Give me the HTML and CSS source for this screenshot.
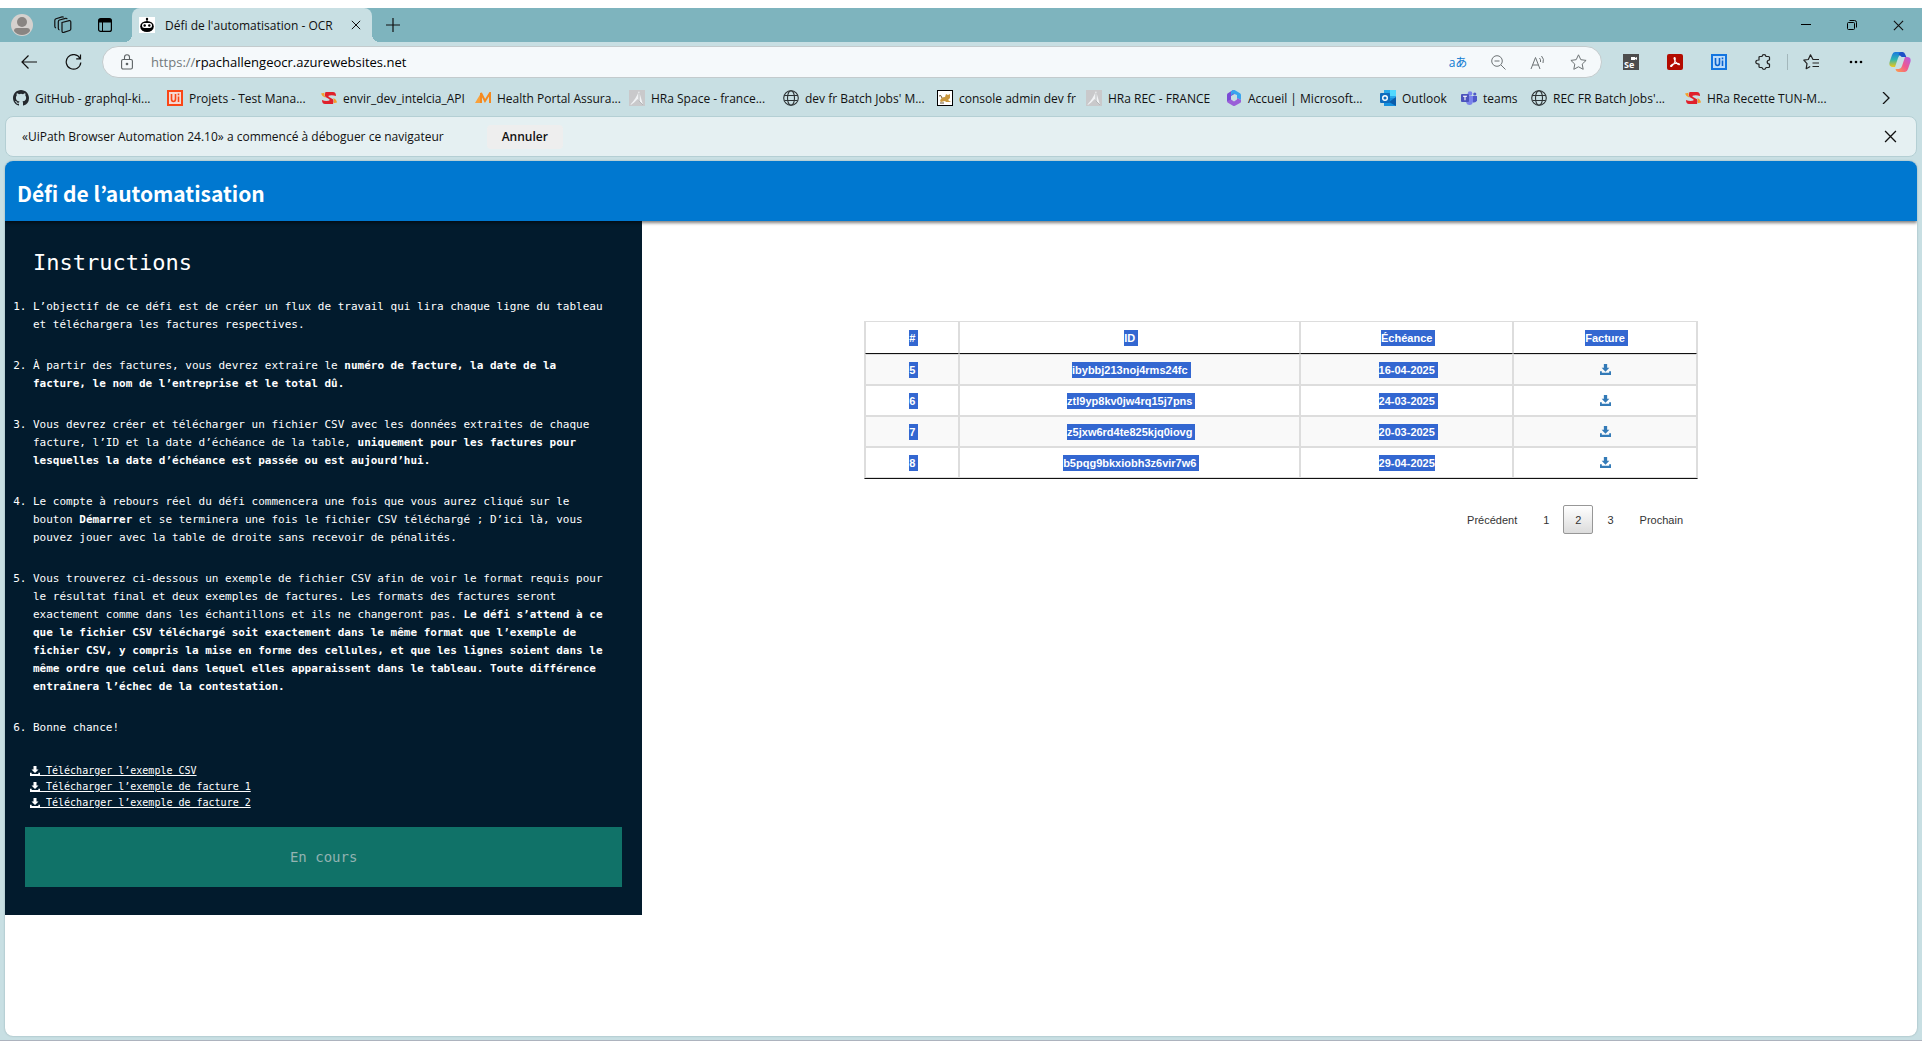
FILE: index.html
```html
<!DOCTYPE html>
<html lang="fr">
<head>
<meta charset="utf-8">
<meta name="viewport" content="width=device-width, initial-scale=1">
<title>Défi de l'automatisation - OCR</title>
<link rel="stylesheet" href="styles.css">
</head>
<body>
<svg class="sprite" aria-hidden="true">
  <symbol id="i-download" viewBox="0 0 12 12"><path d="M4.200 0h3.600v4.200h2.400L6 8.400 1.800 4.200h2.400zM0 8h2v1.500h8V8h2v4H0z"/></symbol>
  <symbol id="i-close" viewBox="0 0 12 12"><path d="M1 1l10 10M11 1L1 11" fill="none" stroke="currentColor" stroke-width="1.200"/></symbol>
  <symbol id="i-globe" viewBox="0 0 16 16"><g fill="none" stroke="#2d3335" stroke-width="1.100"><circle cx="8" cy="8" r="7.300"/><ellipse cx="8" cy="8" rx="3.500" ry="7.300"/><path d="M1.500 5.500h13M1.500 10.500h13"/></g></symbol>
  <symbol id="i-sopra" viewBox="0 0 16 12"><path d="M4.500 0H12q3 0 3 4-3-1.200-6.500-.6Q6.500 3.800 8 5l4 2.300q1.300 1.700 0 4.700H4q-3 0-3-4 3 1.300 6.500.8Q9.500 8.200 8 7L4.500 5Q3 3 4.500 0z" fill="#e0202b"/><path d="M0 1.500L3.500.8Q2.500 3.500 4.500 5.700 1 4.800 0 1.500zM16 10.500l-3.500.7q1-3-.3-5Q15.500 7 16 10.500z" fill="#f5a02a"/></symbol>
  <symbol id="i-hra" viewBox="0 0 16 16"><rect width="16" height="16" fill="#c9c9cb"/><path d="M1 15C5 11 8 6 10 1l4 14-5.500-6C6 12 4 14 1 15z" fill="#f1f3f5"/><path d="M10 3v8l4 4" fill="none" stroke="#b5b7b9"/></symbol>
</svg>

<header class="browser">
  <div class="tabstrip">
    <button class="slot slot-profile" aria-label="Profil"><svg width="22" height="22" viewBox="0 0 22 22"><circle cx="11" cy="11" r="11" fill="#d5d1ce"/><circle cx="11" cy="8" r="5" fill="#898582"/><path d="M3 17q0-3 3-3h10q3 0 3 3-3 4-8 4t-8-4z" fill="#898582"/></svg></button>
    <button class="slot slot-tool" aria-label="Espaces de travail"><svg width="18" height="18" viewBox="0 0 18 18" fill="none" stroke="#111" stroke-width="1.200"><path d="M8 6.500l7.200-1.800q1.600-.3 1.600 1.300v7q0 1.200-1.200 1.500l-5.800 1.900q-1.800.4-1.800-1.400z"/><path d="M5.500 14q-1.200-.2-1.200-1.700V5.700q0-1.300 1.200-1.700l6-1.700q1.300-.2 1.700.8M2 12q-1.200-.3-1.200-1.700V4.400q0-1.300 1.200-1.700L8 .9q1.200-.2 1.600.5"/></svg></button>
    <button class="slot slot-tool" aria-label="Onglets verticaux"><svg width="14" height="14" viewBox="0 0 14 14"><rect x=".6" y=".6" width="12.800" height="12.800" rx="2" fill="none" stroke="#000" stroke-width="1.200"/><path d="M1 1h12v3.500H1z"/><path d="M4.500 4v9" stroke="#000"/></svg></button>
    <div class="tab">
      <svg width="16" height="16" viewBox="0 0 16 16"><rect width="16" height="16" fill="#fff"/><circle cx="8" cy="2" r="1.200"/><path d="M8 2v3" stroke="#000"/><ellipse cx="8" cy="9.500" rx="6.800" ry="5.500"/><rect x="3" y="6" width="10" height="5" rx="2.500" fill="#fff"/><circle cx="5.700" cy="8.500" r="1.200"/><circle cx="10.300" cy="8.500" r="1.200"/></svg>
      <span class="tab-title">Défi de l'automatisation - OCR</span>
      <button class="tab-close" aria-label="Fermer l'onglet"><svg width="10" height="10"><use href="#i-close"/></svg></button>
    </div>
    <button class="slot slot-new" aria-label="Nouvel onglet"><svg width="14" height="14" viewBox="0 0 14 14"><path d="M7 0v14M0 7h14" stroke="#111" stroke-width="1.200"/></svg></button>
    <div class="window-buttons">
      <button class="slot slot-window" aria-label="Réduire"><svg width="10" height="10"><path d="M0 4.500h10" stroke="#000" stroke-width="1"/></svg></button>
      <button class="slot slot-window" aria-label="Restaurer"><svg width="10" height="10" viewBox="0 0 10 10" fill="none" stroke="#000"><rect x=".5" y="2.500" width="7" height="7" rx="1"/><path d="M2.500.5h5q2 0 2 2v5"/></svg></button>
      <button class="slot slot-window" aria-label="Fermer"><svg width="11" height="11"><use href="#i-close"/></svg></button>
    </div>
  </div>

  <div class="toolbar">
    <button class="slot slot-nav" aria-label="Retour"><svg width="16" height="14" viewBox="0 0 16 14" fill="none" stroke="#111" stroke-width="1.200"><path d="M16 7H1M7.500.5L1 7l6.500 6.500"/></svg></button>
    <button class="slot slot-nav" aria-label="Actualiser"><svg width="17" height="17" viewBox="0 0 17 17" fill="none" stroke="#111" stroke-width="1.200"><path d="M15 4.500A7.300 7.300 0 1 0 15.800 8.500M15.500.5v4.300h-4.300"/></svg></button>
    <form class="address">
      <svg class="lock" width="12" height="16" viewBox="0 0 12 16" fill="none" stroke="#5c6264" stroke-width="1.100"><rect x=".6" y="5.500" width="10.800" height="9.500" rx="1.500"/><path d="M3.500 5.500V3.300a2.500 2.500 0 0 1 5 0v2.200"/><circle cx="6" cy="10" r=".8" fill="#5c6264"/></svg>
      <label class="scheme" for="url">https://</label>
      <input id="url" class="url" type="text" value="rpachallengeocr.azurewebsites.net">
      <button type="button" class="slot slot-page translate" aria-label="Traduire">aあ</button>
      <button type="button" class="slot slot-page" aria-label="Zoom"><svg width="15" height="15" viewBox="0 0 15 15" fill="none" stroke="#6d7375"><circle cx="6" cy="6" r="5.300"/><path d="M10 10l4.500 4.500M3.500 6h5"/></svg></button>
      <button type="button" class="slot slot-page" aria-label="Lecture à voix haute"><svg width="16" height="15" viewBox="0 0 16 15" fill="none" stroke="#6d7375"><path d="M1 14L5.500 2.500 10 14M2.500 10h6M9.500 3q1.500 1.500 1 4M11.500 1q3 3 1.500 7"/></svg></button>
      <button type="button" class="slot slot-page" aria-label="Favori"><svg width="17" height="16" viewBox="0 0 17 16" fill="none" stroke="#6d7375" stroke-linejoin="round"><path d="M8.500.8l2.300 4.900 5.300.7-3.900 3.700 1 5.200-4.700-2.500-4.700 2.500 1-5.200L.9 6.400l5.300-.7z"/></svg></button>
    </form>
    <div class="extensions">
      <button class="slot slot-ext" aria-label="Selenium IDE"><svg width="16" height="16" viewBox="0 0 16 16"><rect width="16" height="16" fill="#4d4d4d"/><path d="M8 3h4v3H8zM12 4l2-1v3l-2-1z" fill="#fff"/><text class="glyph-se" x="1" y="14">Se</text></svg></button>
      <button class="slot slot-ext" aria-label="Adobe Acrobat"><svg width="16" height="16" viewBox="0 0 16 16"><rect width="16" height="16" rx="2" fill="#b30b00"/><path d="M7.500 3.500q1.200 0 .5 3.500-.8 3.500-3.500 5.500-1.200.3-.8-.8Q5 10 8.500 9.500q4-.5 4 .8-.3 1-2-.2Q7.500 7.500 7 4.500q0-.9.500-1z" fill="none" stroke="#fff" stroke-width="1.100"/></svg></button>
      <button class="slot slot-ext" aria-label="UiPath"><svg width="16" height="16" viewBox="0 0 16 16"><rect x="1" y="1" width="14" height="14" fill="#bcdcfa" stroke="#1375e0" stroke-width="2"/><path d="M4.500 4v5q0 2.500 2 2.500t2-2.500V4M11.500 6.500V12M11.500 3.500v1.800" fill="none" stroke="#0a63cf" stroke-width="1.600"/></svg></button>
      <button class="slot slot-ext" aria-label="Extensions"><svg width="16" height="16" viewBox="0 0 16 16" fill="none" stroke="#222" stroke-width="1.200" stroke-linejoin="round"><path d="M5 2.500h2Q7.200.6 9 .6t2 1.900h2.500q1 0 1 1V6q-2.300.1-2.300 2t2.300 2v2.500q0 1-1 1H11q-.2 1.900-2 1.900t-2-1.900H5q-1 0-1-1V10Q.8 10 .8 8T4 6V3.500q0-1 1-1z"/></svg></button>
      <button class="slot slot-ext divided" aria-label="Favoris"><svg width="17" height="16" viewBox="0 0 17 16" fill="none" stroke="#222" stroke-width="1.200"><path d="M16 5.500H10L7.500.8 5.300 5.500.8 6.200 4 9.700l-.8 5 4-2.200M9.500 9H16M9.500 12.500H16" stroke-linejoin="round"/></svg></button>
      <button class="slot slot-ext" aria-label="Paramètres"><svg width="14" height="4"><circle cx="2" cy="2" r="1.300"/><circle cx="7" cy="2" r="1.300"/><circle cx="12" cy="2" r="1.300"/></svg></button>
      <button class="slot slot-ext" aria-label="Copilot"><svg width="22" height="20" viewBox="0 0 22 20"><defs><linearGradient id="cp1" x1="0" y1="0" x2="0" y2="1"><stop offset="0" stop-color="#1b78e0"/><stop offset=".5" stop-color="#2fb6b0"/><stop offset="1" stop-color="#f3c813"/></linearGradient><linearGradient id="cp2" x1="1" y1="0" x2="0" y2="1"><stop offset="0" stop-color="#b05be8"/><stop offset=".5" stop-color="#f0588e"/><stop offset="1" stop-color="#ffa14a"/></linearGradient></defs><path d="M15.500 3Q15 0 12 0H6Q4 0 3 3L.6 10Q-.6 15 4 15h2l3-9q.8-3 3-3z" fill="url(#cp1)"/><path d="M12 0h1.500q2 0 3 3l.8 2h-4.600Q11 3 9.500 2.500 10.500 0 12 0z" fill="#1d50c8"/><path d="M6.500 17Q7 20 10 20h6q2 0 3-3l2.400-7Q22.600 5 18 5h-2l-3 9q-.8 3-3 3z" fill="url(#cp2)"/></svg></button>
    </div>
  </div>

  <nav class="bookmarks" aria-label="Favoris">
    <a class="bookmark" href="#"><svg width="16" height="16" viewBox="0 0 16 16"><path fill="#24292e" d="M8 0C3.580 0 0 3.580 0 8c0 3.540 2.290 6.530 5.470 7.590.4.070.55-.17.55-.38 0-.19-.01-.82-.01-1.490-2.010.37-2.530-.49-2.690-.94-.09-.23-.48-.94-.82-1.130-.28-.15-.68-.52-.01-.53.63-.01 1.080.58 1.230.82.72 1.210 1.870.87 2.330.66.07-.52.28-.87.51-1.070-1.780-.2-3.640-.89-3.640-3.950 0-.87.31-1.590.82-2.150-.08-.2-.36-1.020.08-2.120 0 0 .67-.21 2.200.82a7.400 7.400 0 0 1 4 0c1.530-1.040 2.200-.82 2.200-.82.44 1.100.16 1.920.08 2.120.51.56.82 1.270.82 2.150 0 3.070-1.870 3.750-3.650 3.950.29.25.54.73.54 1.480 0 1.070-.01 1.930-.01 2.200 0 .21.15.46.55.38A8 8 0 0 0 16 8c0-4.420-3.580-8-8-8z"/></svg>GitHub - graphql-ki...</a>
    <a class="bookmark" href="#"><svg width="16" height="16" viewBox="0 0 16 16"><rect x="1" y="1" width="14" height="14" fill="#f5d9d4" stroke="#fa4616" stroke-width="2"/><path d="M4.500 4v5q0 2.500 2 2.500t2-2.500V4M11.500 6.500V12M11.500 3.500v1.800" fill="none" stroke="#fa4616" stroke-width="1.600"/></svg>Projets - Test Mana...</a>
    <a class="bookmark" href="#"><svg width="16" height="12"><use href="#i-sopra"/></svg>envir_dev_intelcia_API</a>
    <a class="bookmark" href="#"><svg width="16" height="12" viewBox="0 0 16 12"><path d="M0 11L6 1v10z" fill="#f9a13a"/><path d="M6 11V1l4 8 5-8v10" fill="none" stroke="#f58a1f" stroke-width="2"/></svg>Health Portal Assura...</a>
    <a class="bookmark" href="#"><svg width="16" height="16"><use href="#i-hra"/></svg>HRa Space - france...</a>
    <a class="bookmark" href="#"><svg width="16" height="16"><use href="#i-globe"/></svg>dev fr Batch Jobs' M...</a>
    <a class="bookmark fit-console" href="#"><svg width="16" height="16" viewBox="0 0 16 16"><rect x=".5" y=".5" width="15" height="15" fill="#fff" stroke="#000"/><path d="M3 11Q4 7 8 7l1-3 2 1 2-1v4l-2 2 3 2H9l-1-1-4 1z" fill="#c9983f"/><path d="M3 13h4M2 6q2-2 3 2" stroke="#6a5330" fill="none"/></svg>console admin dev fr</a>
    <a class="bookmark fit-rec" href="#"><svg width="16" height="16"><use href="#i-hra"/></svg>HRa REC - FRANCE</a>
    <a class="bookmark" href="#"><svg width="16" height="16" viewBox="0 0 16 16"><path d="M7 0L1.500 3.500Q1 4 1 5v6l4 2.500V6l6-3.500z" fill="#7a4bd6"/><path d="M7 0q1-.4 2 .2l5 3q1 .6 1 1.800v5l-4-2V5L7 3.500 5 6V1.500z" fill="#3aa5ee"/><path d="M15 10v1.500q0 1-1 1.600l-5 2.700q-1 .5-2 0l-5.500-3.300L1 11l4-1.500 3 2 3-2V8z" fill="#9a5fd8"/></svg>Accueil | Microsoft...</a>
    <a class="bookmark fit-outlook" href="#"><svg width="16" height="16" viewBox="0 0 16 16"><path d="M4 0h12v14H4z" fill="#28a8ea"/><path d="M10 0h6v6h-6z" fill="#50d9ff"/><path d="M4 8l12 0v8H4z" fill="#1490df"/><path d="M9 12l7-5v9z" fill="#0a5dab"/><rect y="3" width="10" height="10" rx="1" fill="#0f6cbd"/><circle cx="5" cy="8" r="2.300" fill="none" stroke="#fff" stroke-width="1.400"/></svg>Outlook</a>
    <a class="bookmark fit-teams" href="#"><svg width="16" height="14" viewBox="0 0 16 14"><circle cx="9" cy="2.500" r="2.300" fill="#7b83eb"/><circle cx="13.800" cy="3" r="1.600" fill="#5059c9"/><path d="M5 5h7v5.500Q11.500 14 8.500 14T5 10.500z" fill="#7b83eb"/><path d="M12 5h4v4.500q-1 2.500-4 2z" fill="#5059c9"/><rect y="3" width="8" height="8" rx="1" fill="#4b53bc"/><path d="M2 5.200h4M4 5v4.200" stroke="#fff" stroke-width="1.100"/></svg>teams</a>
    <a class="bookmark" href="#"><svg width="16" height="16"><use href="#i-globe"/></svg>REC FR Batch Jobs'...</a>
    <a class="bookmark" href="#"><svg width="16" height="12"><use href="#i-sopra"/></svg>HRa Recette TUN-M...</a>
    <button class="slot more" aria-label="Autres favoris"><svg width="8" height="12" viewBox="0 0 8 12"><path d="M1 0l6 6-6 6" fill="none" stroke="#111" stroke-width="1.300"/></svg></button>
  </nav>

  <div class="infobar">
    <span>«UiPath Browser Automation 24.10» a commencé à déboguer ce navigateur</span>
    <button class="cancel">Annuler</button>
    <button class="slot dismiss" aria-label="Fermer"><svg width="13" height="13"><use href="#i-close"/></svg></button>
  </div>
</header>

<div class="page">
  <div class="banner"><h1>Défi de l’automatisation</h1></div>
  <div class="columns">
    <aside class="sidebar">
      <h2>Instructions</h2>
      <ol class="steps">
        <li>L’objectif de ce défi est de créer un flux de travail qui lira chaque ligne du tableau et téléchargera les factures respectives.</li>
        <li>À partir des factures, vous devrez extraire le <strong>numéro de facture, la date de la facture, le nom de l’entreprise et le total dû.</strong></li>
        <li>Vous devrez créer et télécharger un fichier CSV avec les données extraites de chaque facture, l’ID et la date d’échéance de la table, <strong>uniquement pour les factures pour lesquelles la date d’échéance est passée ou est aujourd’hui.</strong></li>
        <li>Le compte à rebours réel du défi commencera une fois que vous aurez cliqué sur le bouton <strong>Démarrer</strong> et se terminera une fois le fichier CSV téléchargé ; D’ici là, vous pouvez jouer avec la table de droite sans recevoir de pénalités.</li>
        <li>Vous trouverez ci-dessous un exemple de fichier CSV afin de voir le format requis pour le résultat final et deux exemples de factures. Les formats des factures seront exactement comme dans les échantillons et ils ne changeront pas. <strong>Le défi s’attend à ce que le fichier CSV téléchargé soit exactement dans le même format que l’exemple de fichier CSV, y compris la mise en forme des cellules, et que les lignes soient dans le même ordre que celui dans lequel elles apparaissent dans le tableau. Toute différence entraînera l’échec de la contestation.</strong></li>
        <li>Bonne chance!</li>
      </ol>
      <ul class="samples">
        <li><a href="#"><svg width="10" height="10"><use href="#i-download"/></svg>&nbsp;Télécharger l’exemple CSV</a></li>
        <li><a href="#"><svg width="10" height="10"><use href="#i-download"/></svg>&nbsp;Télécharger l’exemple de facture 1</a></li>
        <li><a href="#"><svg width="10" height="10"><use href="#i-download"/></svg>&nbsp;Télécharger l’exemple de facture 2</a></li>
      </ul>
      <button class="start" disabled>En cours</button>
    </aside>

    <main class="results">
      <table class="invoices">
        <colgroup><col class="col-num"><col class="col-id"><col class="col-due"><col class="col-file"></colgroup>
        <thead>
          <tr><th scope="col"><mark>#</mark></th><th scope="col"><mark>ID</mark></th><th scope="col"><mark>Échéance</mark></th><th scope="col"><mark>Facture</mark></th></tr>
        </thead>
        <tbody>
          <tr><td><mark>5</mark></td><td><mark>ibybbj213noj4rms24fc</mark></td><td><mark>16-04-2025</mark></td><td><a href="#" aria-label="Télécharger la facture 5"><svg width="11" height="11"><use href="#i-download"/></svg></a></td></tr>
          <tr><td><mark>6</mark></td><td><mark>ztl9yp8kv0jw4rq15j7pns</mark></td><td><mark>24-03-2025</mark></td><td><a href="#" aria-label="Télécharger la facture 6"><svg width="11" height="11"><use href="#i-download"/></svg></a></td></tr>
          <tr><td><mark>7</mark></td><td><mark>z5jxw6rd4te825kjq0iovg</mark></td><td><mark>20-03-2025</mark></td><td><a href="#" aria-label="Télécharger la facture 7"><svg width="11" height="11"><use href="#i-download"/></svg></a></td></tr>
          <tr><td><mark>8</mark></td><td><mark>b5pqg9bkxiobh3z6vir7w6</mark></td><td><mark class="selection-end">29-04-2025</mark></td><td><a href="#" aria-label="Télécharger la facture 8"><svg width="11" height="11"><use href="#i-download"/></svg></a></td></tr>
        </tbody>
      </table>
      <nav class="pager" aria-label="Pagination">
        <button>Précédent</button><button>1</button><button class="current" aria-current="page">2</button><button>3</button><button>Prochain</button>
      </nav>
    </main>
  </div>
</div>
</body>
</html>
```
FILE: styles.css
```css
:root {
  --frame: #c8dfe3;
  --strip: #7eb4be;
  --info: #e5f0f2;
  --ui: "Open Sans", "Noto Sans", "Noto Sans CJK JP", sans-serif;
  --title: "Noto Sans CJK KR", "Open Sans", sans-serif;
  --mono: "DejaVu Sans Mono", monospace;
  --sans: "Liberation Sans", Arial, sans-serif;
}

* { box-sizing: border-box; }

body {
  display: flex;
  flex-direction: column;
  min-height: 100vh;
  margin: 0;
  padding: 8px 0 4px;
  background: linear-gradient(#fff 8px, var(--frame) 8px);
  border-bottom: 1px solid #adb3be;
  font-family: var(--ui);
  font-size: 12px;
  color: #111;
}

button {
  padding: 0;
  border: 0;
  background: none;
  color: inherit;
  font: inherit;
}

svg { display: block; flex: none; }
.sprite { position: absolute; width: 0; height: 0; }

.slot {
  display: flex;
  flex: none;
  align-items: center;
  justify-content: center;
}
.slot-profile { width: 40px; }
.slot-tool { width: 42px; }
.slot-new { width: 42px; }
.slot-window { width: 46px; }
.slot-nav { width: 44px; }
.slot-page { width: 40px; }
.slot-ext { width: 44px; }

/* Tab strip */
.tabstrip {
  display: flex;
  height: 34px;
  padding: 0 1px 0 2px;
  background: var(--strip);
}
.tab {
  position: relative;
  display: flex;
  align-items: center;
  width: 240px;
  margin-left: 6px;
  padding: 0 8px 0 7px;
  border-radius: 8px 8px 0 0;
  background: var(--frame);
}
.tab::before,
.tab::after {
  content: "";
  position: absolute;
  bottom: 0;
  width: 8px;
  height: 8px;
}
.tab::before { right: 100%; background: radial-gradient(circle at 0 0, transparent 8px, var(--frame) 8px); }
.tab::after { left: 100%; background: radial-gradient(circle at 100% 0, transparent 8px, var(--frame) 8px); }
.tab-title { flex: 1; margin-left: 10px; white-space: nowrap; }
.tab-close { display: flex; justify-content: center; width: 16px; }
.window-buttons { display: flex; margin-left: auto; }

/* Address row */
.toolbar {
  display: flex;
  align-items: center;
  height: 40px;
  padding-left: 7px;
}
.toolbar .slot { height: 32px; }
.address {
  display: flex;
  flex: 1;
  align-items: center;
  height: 32px;
  margin-left: 7px;
  padding: 0 3px 0 18px;
  border: 1px solid #c3cbcd;
  border-radius: 16px;
  background: #f5f9fb;
  font-size: 13px;
}
.scheme { margin-left: 18px; color: #73797b; }
.url {
  flex: 1;
  min-width: 0;
  padding: 0;
  border: 0;
  outline: 0;
  background: none;
  color: #000;
  font: inherit;
}
.translate { color: #0f7ad1; font-size: 12px; }
.extensions { display: flex; align-items: center; margin-left: 7px; }
.extensions .divided {
  width: 47px;
  height: 16px;
  margin-left: 2px;
  border-left: 1px solid #a3b7bb;
}
.glyph-se { fill: #fff; font: bold 9px var(--ui); }

/* Favourites */
.bookmarks {
  display: flex;
  align-items: center;
  height: 34px;
  padding: 0 0 2px 13px;
}
.bookmark {
  display: flex;
  flex: none;
  align-items: center;
  gap: 6px;
  width: 154px;
  color: inherit;
  text-decoration: none;
  white-space: nowrap;
}
.fit-console { width: 149px; }
.fit-rec { width: 140px; }
.fit-outlook { width: 81px; }
.fit-teams { width: 70px; }
.more { width: 32px; margin: 0 20px 0 auto; }

/* Debugging notice */
.infobar {
  display: flex;
  align-items: center;
  height: 41px;
  margin: 0 5px;
  padding: 0 10px 0 16px;
  border: 1px solid #b4cfd4;
  border-radius: 8px;
  background: var(--info);
}
.cancel {
  width: 76px;
  height: 24px;
  margin-left: 43px;
  border-radius: 4px;
  background: #eee;
  font-weight: 600;
}
.dismiss { width: 32px; height: 32px; margin-left: auto; }

/* Web page */
.page {
  flex: 1;
  overflow: hidden;
  margin: 4px 5px 0;
  border-radius: 8px;
  background: #fff;
  box-shadow: 0 0 2px #8fa9ae;
}
.banner {
  position: relative;
  height: 60px;
  padding: 0 12px;
  background: #0078d0;
  box-shadow: 0 2px 3px rgba(0, 0, 0, .5);
}
.banner h1 {
  margin: 0;
  color: #fff;
  font: bold 21px/64px var(--title);
}
.columns { display: flex; align-items: flex-start; }

.sidebar {
  width: 33.333%;
  padding: 28px 20px;
  background: #021b2d;
  color: #fff;
  font: 11px/18px var(--mono);
}
.sidebar h2 {
  margin: 0 0 21px 8px;
  font-size: 22px;
  font-weight: normal;
  line-height: 28px;
}
.steps {
  display: grid;
  row-gap: 23px;
  margin: 0;
  padding: 0 17px 0 8px;
}
.samples {
  margin: 26px 0 0 5px;
  padding: 0;
  list-style: none;
  font-size: 10px;
  line-height: 16px;
}
.samples a { color: inherit; }
.samples svg { display: inline-block; vertical-align: text-bottom; fill: currentColor; }
.start {
  display: block;
  width: 100%;
  height: 60px;
  margin-top: 16px;
  background: #107268;
  color: #93b3b2;
  font-size: 14px;
}

.results {
  flex: 1;
  padding: 100px 219px 0 222px;
  font: 11px/16px var(--sans);
}
.invoices {
  width: 100%;
  border: 1px solid #ddd;
  border-bottom-color: #111;
  border-collapse: separate;
  border-spacing: 0;
  table-layout: fixed;
  font-weight: bold;
  text-align: center;
}
.col-num { width: 11.3%; }
.col-id { width: 41%; }
.col-due { width: 25.6%; }
.col-file { width: 22.1%; }
.invoices th,
.invoices td { padding: 0; border: 1px solid #ddd; }
.invoices th { height: 32px; border-top: 0; border-bottom-color: #111; }
.invoices td { height: 31px; }
.invoices tbody tr:nth-child(odd) { background: #f9f9f9; }
.invoices mark {
  display: inline-block;
  margin-right: -3px;
  padding-right: 3px;
  background: #3367d1;
  color: #fff;
}
.invoices .selection-end { margin-right: 0; padding-right: 0; }
.invoices svg { margin: 0 auto; fill: #337ab7; }

.pager {
  display: flex;
  justify-content: flex-end;
  gap: 2px;
  margin-top: 26px;
  padding-right: 3px;
}
.pager button {
  height: 29px;
  padding: 0 11px;
  border: 1px solid transparent;
  border-radius: 2px;
  color: #333;
}
.pager .current {
  border-color: #979797;
  background: linear-gradient(#fff, #dcdcdc);
}
```
